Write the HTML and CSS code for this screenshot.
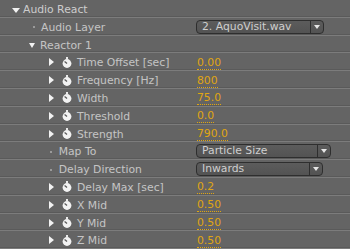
FILE: index.html
```html
<!DOCTYPE html>
<html>
<head>
<meta charset="utf-8">
<link rel="stylesheet" href="styles.css">
</head>
<body>
<div class="panel">
  <div class="row"><div class="lbl d0"><span class="tw-down big"></span><span class="txt top">Audio React</span></div><div class="val"></div></div>
  <div class="row"><div class="lbl d1"><span class="dot"></span><span class="txt">Audio Layer</span></div><div class="val"><div class="dd w1"><span class="ddt">2. AquoVisit.wav</span><span class="dda"></span></div></div></div>
  <div class="row"><div class="lbl d1t"><span class="tw-down"></span><span class="txt">Reactor 1</span></div><div class="val"></div></div>
  <div class="row"><div class="lbl d2"><span class="tw-right"></span><span class="sw"><svg width="10" height="11" viewBox="0 0 10 11"><rect x="4" y="0" width="2" height="2" fill="#e8e8e8"/><circle cx="5" cy="6.5" r="4.4" fill="#f2f2f2"/><line x1="5" y1="6.5" x2="2.6" y2="4.4" stroke="#5a5a5a" stroke-width="1.3"/></svg></span><span class="txt">Time Offset [sec]</span></div><div class="val"><span class="num">0.00</span></div></div>
  <div class="row"><div class="lbl d2"><span class="tw-right"></span><span class="sw"><svg width="10" height="11" viewBox="0 0 10 11"><rect x="4" y="0" width="2" height="2" fill="#e8e8e8"/><circle cx="5" cy="6.5" r="4.4" fill="#f2f2f2"/><line x1="5" y1="6.5" x2="2.6" y2="4.4" stroke="#5a5a5a" stroke-width="1.3"/></svg></span><span class="txt">Frequency [Hz]</span></div><div class="val"><span class="num">800</span></div></div>
  <div class="row"><div class="lbl d2"><span class="tw-right"></span><span class="sw"><svg width="10" height="11" viewBox="0 0 10 11"><rect x="4" y="0" width="2" height="2" fill="#e8e8e8"/><circle cx="5" cy="6.5" r="4.4" fill="#f2f2f2"/><line x1="5" y1="6.5" x2="2.6" y2="4.4" stroke="#5a5a5a" stroke-width="1.3"/></svg></span><span class="txt">Width</span></div><div class="val"><span class="num">75.0</span></div></div>
  <div class="row"><div class="lbl d2"><span class="tw-right"></span><span class="sw"><svg width="10" height="11" viewBox="0 0 10 11"><rect x="4" y="0" width="2" height="2" fill="#e8e8e8"/><circle cx="5" cy="6.5" r="4.4" fill="#f2f2f2"/><line x1="5" y1="6.5" x2="2.6" y2="4.4" stroke="#5a5a5a" stroke-width="1.3"/></svg></span><span class="txt">Threshold</span></div><div class="val"><span class="num">0.0</span></div></div>
  <div class="row"><div class="lbl d2"><span class="tw-right"></span><span class="sw"><svg width="10" height="11" viewBox="0 0 10 11"><rect x="4" y="0" width="2" height="2" fill="#e8e8e8"/><circle cx="5" cy="6.5" r="4.4" fill="#f2f2f2"/><line x1="5" y1="6.5" x2="2.6" y2="4.4" stroke="#5a5a5a" stroke-width="1.3"/></svg></span><span class="txt">Strength</span></div><div class="val"><span class="num">790.0</span></div></div>
  <div class="row"><div class="lbl d2d"><span class="dot"></span><span class="txt">Map To</span></div><div class="val"><div class="dd w2"><span class="ddt">Particle Size</span><span class="dda"></span></div></div></div>
  <div class="row"><div class="lbl d2d"><span class="dot"></span><span class="txt">Delay Direction</span></div><div class="val"><div class="dd w3"><span class="ddt">Inwards</span><span class="dda"></span></div></div></div>
  <div class="row"><div class="lbl d2"><span class="tw-right"></span><span class="sw"><svg width="10" height="11" viewBox="0 0 10 11"><rect x="4" y="0" width="2" height="2" fill="#e8e8e8"/><circle cx="5" cy="6.5" r="4.4" fill="#f2f2f2"/><line x1="5" y1="6.5" x2="2.6" y2="4.4" stroke="#5a5a5a" stroke-width="1.3"/></svg></span><span class="txt">Delay Max [sec]</span></div><div class="val"><span class="num">0.2</span></div></div>
  <div class="row"><div class="lbl d2"><span class="tw-right"></span><span class="sw"><svg width="10" height="11" viewBox="0 0 10 11"><rect x="4" y="0" width="2" height="2" fill="#e8e8e8"/><circle cx="5" cy="6.5" r="4.4" fill="#f2f2f2"/><line x1="5" y1="6.5" x2="2.6" y2="4.4" stroke="#5a5a5a" stroke-width="1.3"/></svg></span><span class="txt">X Mid</span></div><div class="val"><span class="num">0.50</span></div></div>
  <div class="row"><div class="lbl d2"><span class="tw-right"></span><span class="sw"><svg width="10" height="11" viewBox="0 0 10 11"><rect x="4" y="0" width="2" height="2" fill="#e8e8e8"/><circle cx="5" cy="6.5" r="4.4" fill="#f2f2f2"/><line x1="5" y1="6.5" x2="2.6" y2="4.4" stroke="#5a5a5a" stroke-width="1.3"/></svg></span><span class="txt">Y Mid</span></div><div class="val"><span class="num">0.50</span></div></div>
  <div class="row"><div class="lbl d2"><span class="tw-right"></span><span class="sw"><svg width="10" height="11" viewBox="0 0 10 11"><rect x="4" y="0" width="2" height="2" fill="#e8e8e8"/><circle cx="5" cy="6.5" r="4.4" fill="#f2f2f2"/><line x1="5" y1="6.5" x2="2.6" y2="4.4" stroke="#5a5a5a" stroke-width="1.3"/></svg></span><span class="txt">Z Mid</span></div><div class="val"><span class="num">0.50</span></div></div>
</div>
</body>
</html>
```
FILE: styles.css
```css
html, body {
  margin: 0;
  padding: 0;
  background: #646464;
}
.panel {
  width: 350px;
  height: 249px;
  overflow: hidden;
  font-family: "DejaVu Sans", "Liberation Sans", sans-serif;
  font-size: 10.8px;
  color: #c4c4c4;
}
.row {
  box-sizing: border-box;
  height: 17.8px;
  display: grid;
  grid-template-columns: 196px 1fr;
  border-bottom: 1px solid #7c7c7c;
  box-shadow: inset 0 -1px 0 #5a5a5a;
}
.lbl {
  display: flex;
  align-items: center;
}
.d0 { padding-left: 12px; }
.d1 { padding-left: 33px; }
.d1t { padding-left: 29px; }
.d2 { padding-left: 49px; }
.d2d { padding-left: 50px; }
.txt { line-height: 17px; padding-top: 1px; }
.top { color: #cdcdcd; }
.tw-down {
  width: 0; height: 0;
  border-left: 3.5px solid transparent;
  border-right: 3.5px solid transparent;
  border-top: 5px solid #f2f2f2;
  margin-right: 5px;
  margin-top: 2px;
}
.tw-down.big {
  border-left-width: 4px;
  border-right-width: 4px;
  margin-right: 3px;
}
.tw-right {
  width: 0; height: 0;
  border-top: 4px solid transparent;
  border-bottom: 4px solid transparent;
  border-left: 5px solid #f2f2f2;
  margin-right: 8px;
}
.sw {
  width: 15px;
  display: flex;
  align-items: center;
  box-sizing: border-box;
}
.sw svg { display: block; }
.dot {
  width: 2px; height: 2px;
  background: #9a9a9a;
  margin-right: 6px;
  margin-top: 1px;
}
.d2d .dot { margin-right: 6.7px; }
.val {
  display: flex;
  align-items: center;
  padding-left: 1px;
}
.num {
  color: #e0a612;
  line-height: 13px;
  border-bottom: 1px dotted #e0a612;
  margin-top: 1px;
}
.dd {
  box-sizing: border-box;
  height: 14px;
  display: flex;
  align-items: stretch;
  border: 1px solid #2e2e2e;
  border-radius: 4px;
  background: linear-gradient(#5c5c5c, #535353);
  margin-left: -1px;
}
.w1 { width: 128px; }
.w2 { width: 135px; }
.w3 { width: 127px; }
.ddt {
  flex: 1;
  color: #cfcfcf;
  padding-left: 5px;
  line-height: 12px;
}
.dda {
  width: 12px;
  border-left: 1px solid #2e2e2e;
  display: flex;
  align-items: center;
  justify-content: center;
}
.dda::after {
  content: "";
  width: 0; height: 0;
  border-left: 3px solid transparent;
  border-right: 3px solid transparent;
  border-top: 4px solid #e6e6e6;
}
```
